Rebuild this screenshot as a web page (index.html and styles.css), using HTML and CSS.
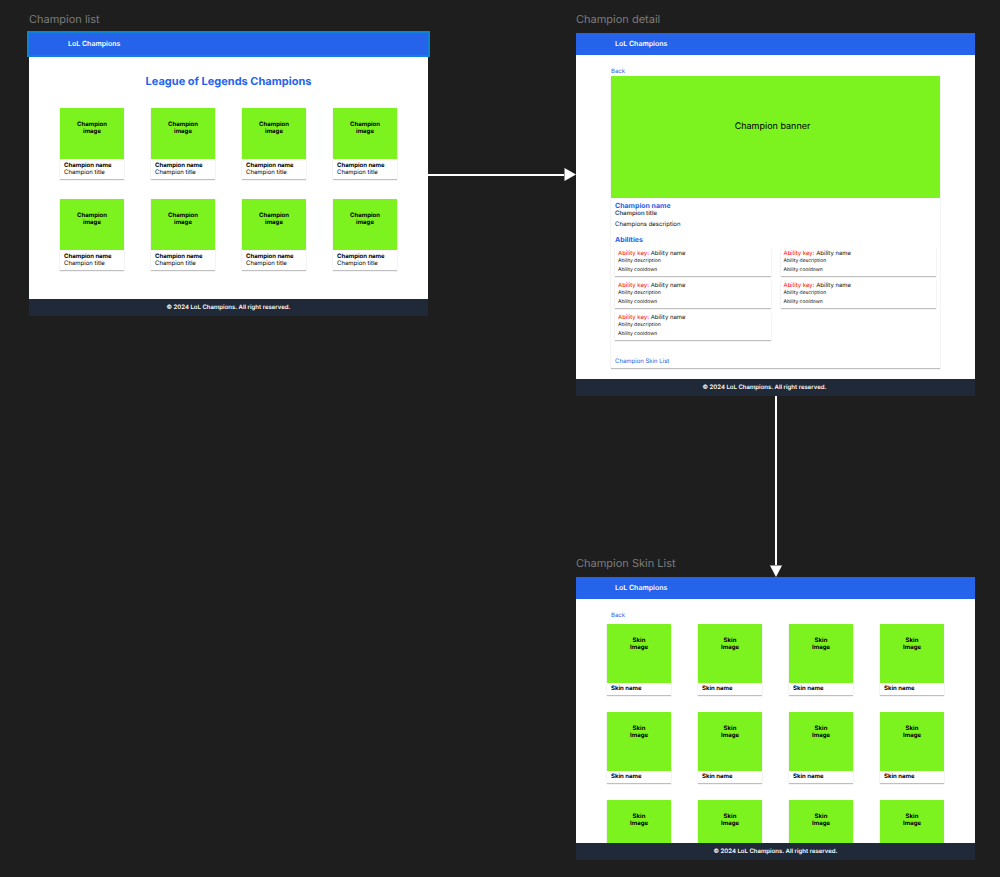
FILE: index.html
```html
<!DOCTYPE html>
<html lang="en">
<head>
<meta charset="utf-8">
<meta name="viewport" content="width=device-width, initial-scale=1">
<title>LoL Champions wireframes</title>
<link rel="stylesheet" href="styles.css">
</head>
<body>
<main class="board">
  <h2 class="label label-list">Champion list</h2>
  <article class="frame frame-list" id="list">
    <header class="bar selected">LoL Champions</header>
    <div class="list-body">
      <h1 class="title">League of Legends Champions</h1>
      <div class="cards">
        <section class="card"><div class="pic">Champion<br>image</div><div class="info"><h3>Champion name</h3><p>Champion title</p></div></section>
        <section class="card"><div class="pic">Champion<br>image</div><div class="info"><h3>Champion name</h3><p>Champion title</p></div></section>
        <section class="card"><div class="pic">Champion<br>image</div><div class="info"><h3>Champion name</h3><p>Champion title</p></div></section>
        <section class="card"><div class="pic">Champion<br>image</div><div class="info"><h3>Champion name</h3><p>Champion title</p></div></section>
        <section class="card"><div class="pic">Champion<br>image</div><div class="info"><h3>Champion name</h3><p>Champion title</p></div></section>
        <section class="card"><div class="pic">Champion<br>image</div><div class="info"><h3>Champion name</h3><p>Champion title</p></div></section>
        <section class="card"><div class="pic">Champion<br>image</div><div class="info"><h3>Champion name</h3><p>Champion title</p></div></section>
        <section class="card"><div class="pic">Champion<br>image</div><div class="info"><h3>Champion name</h3><p>Champion title</p></div></section>
      </div>
    </div>
    <footer class="foot">© 2024 LoL Champions. All right reserved.</footer>
  </article>

  <div class="arrow-right">
    <span class="line"></span>
    <svg width="12" height="13" viewBox="0 0 12 13" aria-hidden="true"><path d="M0.5 0L12 6.5L0.5 13Z" fill="#fff"/></svg>
  </div>

  <h2 class="label label-detail">Champion detail</h2>
  <article class="frame frame-detail">
    <header class="bar">LoL Champions</header>
    <div class="detail-body">
      <a class="link" href="#list">Back</a>
      <div class="panel">
        <div class="banner">Champion banner</div>
        <div class="content">
          <h3 class="name">Champion name</h3>
          <p class="subtitle">Champion title</p>
          <p class="desc">Champions description</p>
          <h3 class="name abilities-title">Abilities</h3>
          <div class="abilities">
            <section class="ability"><h4><span class="key">Ability key:</span> Ability name</h4><p>Ability description</p><p class="cooldown">Ability cooldown</p></section>
            <section class="ability"><h4><span class="key">Ability key:</span> Ability name</h4><p>Ability description</p><p class="cooldown">Ability cooldown</p></section>
            <section class="ability"><h4><span class="key">Ability key:</span> Ability name</h4><p>Ability description</p><p class="cooldown">Ability cooldown</p></section>
            <section class="ability"><h4><span class="key">Ability key:</span> Ability name</h4><p>Ability description</p><p class="cooldown">Ability cooldown</p></section>
            <section class="ability"><h4><span class="key">Ability key:</span> Ability name</h4><p>Ability description</p><p class="cooldown">Ability cooldown</p></section>
          </div>
          <a class="link" href="#skins">Champion Skin List</a>
        </div>
      </div>
    </div>
    <footer class="foot foot-detail">© 2024 LoL Champions. All right reserved.</footer>
  </article>

  <div class="arrow-down">
    <span class="line"></span>
    <svg width="12" height="12" viewBox="0 0 12 12" aria-hidden="true"><path d="M0 0.5L12 0.5L6 12Z" fill="#fff"/></svg>
  </div>

  <h2 class="label label-skins">Champion Skin List</h2>
  <article class="frame frame-skins" id="skins">
    <header class="bar">LoL Champions</header>
    <div class="skins-body">
      <a class="link back" href="#list">Back</a>
      <div class="cards skins">
        <section class="card"><div class="pic">Skin<br>Image</div><h3>Skin name</h3></section>
        <section class="card"><div class="pic">Skin<br>Image</div><h3>Skin name</h3></section>
        <section class="card"><div class="pic">Skin<br>Image</div><h3>Skin name</h3></section>
        <section class="card"><div class="pic">Skin<br>Image</div><h3>Skin name</h3></section>
        <section class="card"><div class="pic">Skin<br>Image</div><h3>Skin name</h3></section>
        <section class="card"><div class="pic">Skin<br>Image</div><h3>Skin name</h3></section>
        <section class="card"><div class="pic">Skin<br>Image</div><h3>Skin name</h3></section>
        <section class="card"><div class="pic">Skin<br>Image</div><h3>Skin name</h3></section>
        <section class="card"><div class="pic">Skin<br>Image</div></section>
        <section class="card"><div class="pic">Skin<br>Image</div></section>
        <section class="card"><div class="pic">Skin<br>Image</div></section>
        <section class="card"><div class="pic">Skin<br>Image</div></section>
      </div>
    </div>
    <footer class="foot">© 2024 LoL Champions. All right reserved.</footer>
  </article>
</main>
</body>
</html>
```

FILE: styles.css
```css
* {
  box-sizing: border-box;
  margin: 0;
  padding: 0;
}

body {
  background: #1e1e1e;
  color: #111;
  font-family: Inter, "Liberation Sans", sans-serif;
  font-size: 6px;
  line-height: 7px;
  text-rendering: geometricPrecision;
}

h3, h4 {
  font-size: inherit;
}

.board {
  display: grid;
  grid-template-columns: minmax(0, 1fr) 148px minmax(0, 1fr);
  grid-template-rows: 21px auto 160px 21px auto;
  align-items: start;
  min-height: 100vh;
  align-content: start;
  padding: 12px 25px 16px 29px;
}

.label {
  color: #7c7c7c;
  font-size: 11px;
  font-weight: 400;
  line-height: 14px;
}

.label-list { grid-area: 1 / 1; }
.label-detail { grid-area: 1 / 3; }
.label-skins { grid-area: 4 / 3; }
.frame-list { grid-area: 2 / 1; }
.frame-detail { grid-area: 2 / 3; }
.frame-skins { grid-area: 5 / 3; }

.frame {
  background: #fff;
}

.bar {
  background: #2563eb;
  color: #fff;
  font-size: 7px;
  font-weight: 600;
  line-height: 22px;
  padding-left: 39px;
}

.selected {
  outline: 2px solid #0d83d6;
}

.foot {
  background: #1f2937;
  color: #fff;
  font-weight: 600;
  line-height: 17px;
  text-align: center;
}

.foot-detail {
  padding-right: 22px;
}

/* Connectors */
.line {
  flex: 1;
  background: #fff;
}

.arrow-right {
  grid-area: 2 / 2;
  display: flex;
  align-items: center;
  margin-top: 135px;
}

.arrow-right .line {
  height: 2px;
}

.arrow-down {
  grid-area: 3 / 3 / 5 / 4;
  display: flex;
  flex-direction: column;
  align-items: center;
  align-self: stretch;
  justify-self: center;
}

.arrow-down .line {
  width: 2px;
}

/* Card grids */
.list-body {
  padding: 19px 31px 29px;
}

.title {
  color: #2563eb;
  font-size: 11px;
  font-weight: 700;
  line-height: 14px;
  margin-bottom: 20px;
  text-align: center;
}

.cards {
  display: grid;
  grid-template-columns: repeat(4, minmax(0, 1fr));
  gap: 20px 27px;
}

.card {
  background: #fff;
  box-shadow: 0 1px 1px rgba(0, 0, 0, 0.25);
  color: #000;
}

.pic {
  background: #7cf31e;
  font-weight: 700;
  height: 51px;
  padding-top: 13px;
  text-align: center;
}

.info {
  padding: 3px 4px;
}

/* Detail */
.detail-body {
  padding: 13px 35px 11px;
}

.link {
  color: #2563eb;
  display: block;
  text-decoration: none;
}

.panel {
  box-shadow: 0 1px 1px rgba(0, 0, 0, 0.25);
  margin-top: 1px;
}

.banner {
  background: #7cf31e;
  color: #000;
  font-size: 9px;
  height: 122px;
  line-height: 12px;
  padding: 45px 6px 0 0;
  text-align: center;
}

.content {
  padding: 4px 4px 3px;
}

.name {
  color: #2563eb;
  font-size: 7px;
  font-weight: 700;
  line-height: 8px;
}

.subtitle {
  color: #374151;
  font-weight: 600;
  line-height: 8px;
}

.desc {
  margin-top: 3px;
}

.abilities-title {
  margin: 8px 0 4px;
}

.abilities {
  display: grid;
  grid-template-columns: repeat(2, minmax(0, 1fr));
  gap: 4px 10px;
  margin-bottom: 18px;
}

.ability {
  box-shadow: 0 1px 1px rgba(0, 0, 0, 0.25);
  font-size: 5px;
  padding: 2px 3px;
}

.ability h4 {
  font-size: 6px;
  font-weight: 400;
  line-height: 8px;
}

.key {
  color: #f00;
}

.cooldown {
  margin-top: 2px;
}

/* Skins */
.skins-body {
  height: 244px;
  overflow: hidden;
  padding: 13px 31px 0;
}

.back {
  margin: 0 4px 5px;
}

.skins {
  row-gap: 17px;
}

.skins .pic {
  height: 59px;
}

.skins h3 {
  line-height: 12px;
  padding-left: 4px;
}
```
